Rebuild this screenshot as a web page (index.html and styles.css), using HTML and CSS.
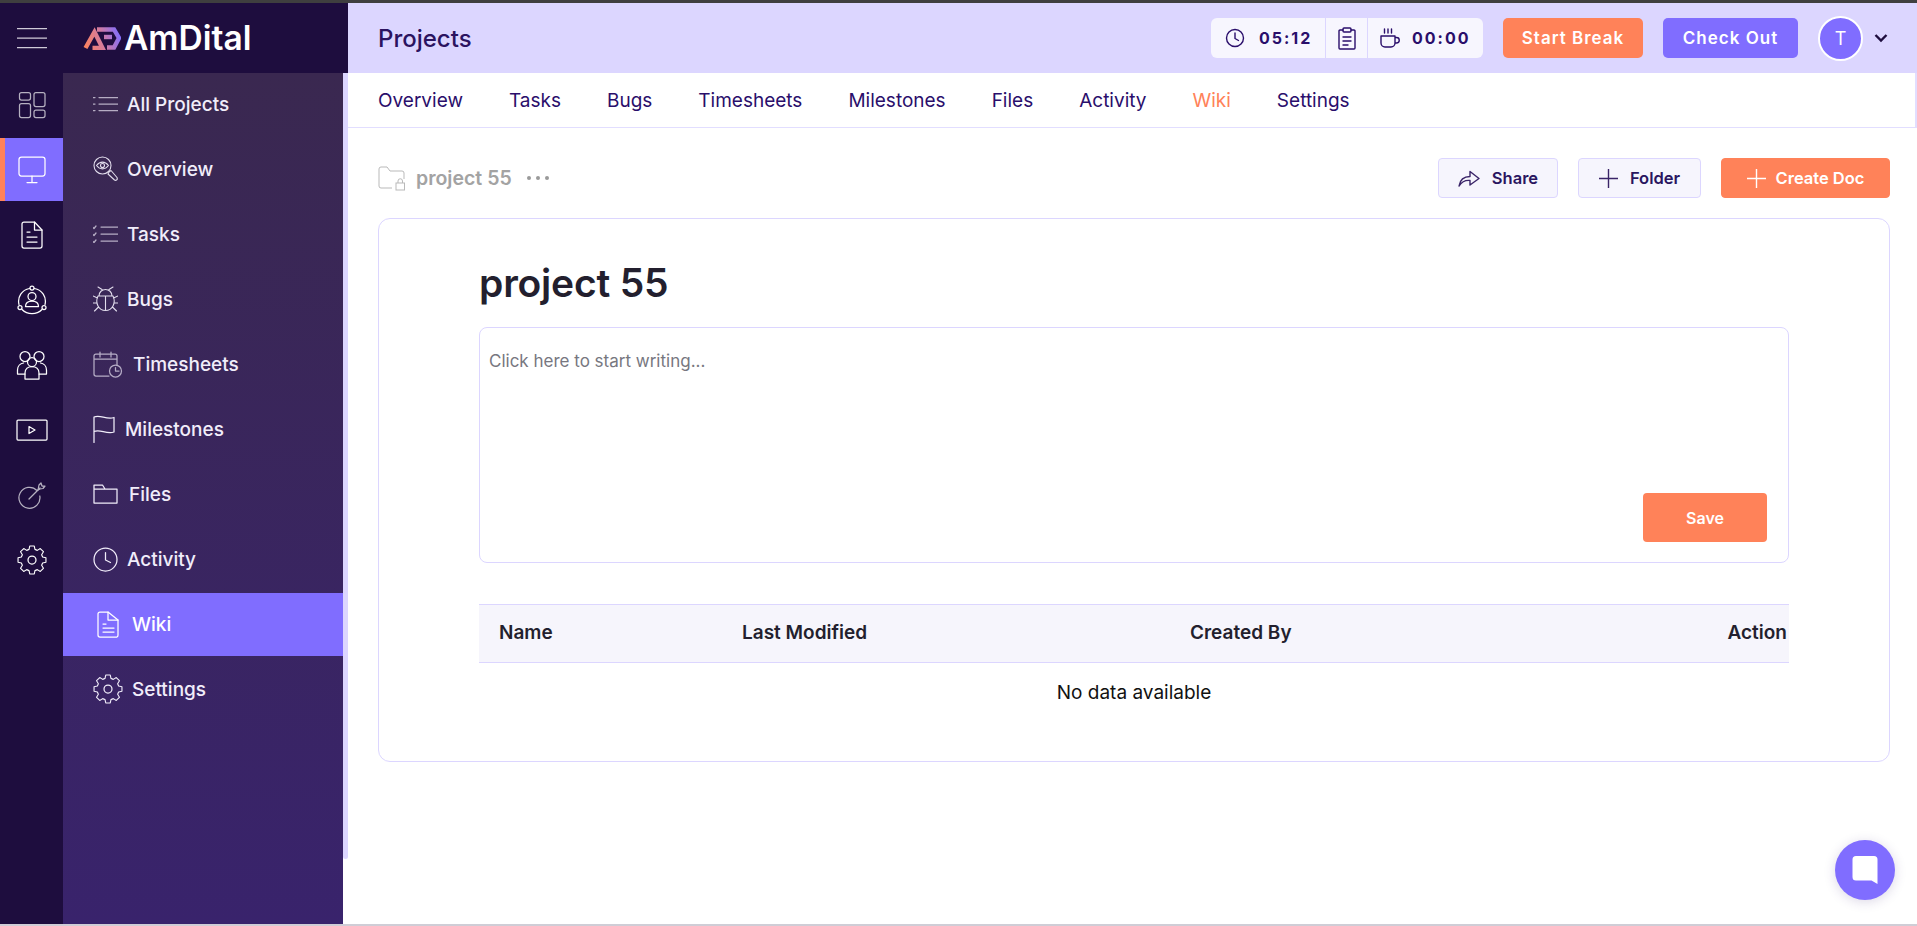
FILE: index.html
```html
<!DOCTYPE html>
<html lang="en">
<head>
<meta charset="utf-8">
<title>AmDital – Projects</title>
<link rel="stylesheet" href="styles.css">
</head>
<body>
<div class="page">
  <div class="topline"></div>
  <div class="app">
    <nav class="rail">
      <div class="rail-top">
        <svg class="ico rail-burger" width="30" height="22" viewBox="0 0 30 22"><path d="M0 1.500h29.500M0 11h29.500M0 20.500h29.500"/></svg>
      </div>
      <div class="rail-list">
        <a class="rail-item"><svg class="ico dim" width="30" height="28" viewBox="0 0 30 28"><rect x="2.500" y="1.500" width="11" height="7.500" rx="2"/><rect x="17" y="1.500" width="11" height="14" rx="2"/><rect x="2.500" y="12.500" width="11" height="14" rx="2"/><rect x="17" y="19" width="11" height="7.500" rx="2"/></svg></a>
        <a class="rail-item active"><svg class="ico" width="30" height="28" viewBox="0 0 30 28"><rect x="2" y="1" width="26" height="19" rx="2.500"/><path d="M15 20v6M10 26.500h10"/></svg></a>
        <a class="rail-item"><svg class="ico" width="24" height="28" viewBox="0 0 24 28"><path d="M14.500 1H4a2 2 0 0 0-2 2v22a2 2 0 0 0 2 2h16a2 2 0 0 0 2-2V9z"/><path d="M14.500 1v8H22M7 11h3M7 16h10M7 21h10"/></svg></a>
        <a class="rail-item"><svg class="ico" width="30" height="30" viewBox="0 0 30 30"><circle cx="15" cy="3" r="2"/><circle cx="3" cy="22.500" r="2"/><circle cx="27" cy="22.500" r="2"/><path d="M12.500 3.500A13 13 0 0 0 2 19.500M17.500 3.500A13 13 0 0 1 28 19.500M5 24.500a14 14 0 0 0 20 0"/><circle cx="15" cy="11.500" r="4"/><path d="M8.500 21.500c0-3.500 2.500-5.500 6.500-5.500s6.500 2 6.500 5.500z"/></svg></a>
        <a class="rail-item"><svg class="ico" width="32" height="30" viewBox="0 0 32 30"><circle cx="9" cy="6.500" r="5"/><circle cx="23" cy="6.500" r="5"/><circle cx="16" cy="12" r="4.500"/><path d="M9 29V23c0-4 3-6.500 7-6.500s7 2.500 7 6.500v6z"/><path d="M9 24H1.500v-4c0-4 3-6.500 6-7M23 24h7.500v-4c0-4-3-6.500-6-7"/></svg></a>
        <a class="rail-item"><svg class="ico" width="32" height="22" viewBox="0 0 32 22"><rect x="1" y="1" width="30" height="20" rx="1"/><path d="M13 7.500l6 3.500-6 3.500z"/></svg></a>
        <a class="rail-item"><svg class="ico dim" width="28" height="28" viewBox="0 0 28 28"><path d="M19 9.500A10.500 10.500 0 1 0 21.800 15M11 18L22 7"/><path d="M20 9l1-5 2-2 1 3h3l-2 2.500-3 .5z"/></svg></a>
        <a class="rail-item"><svg class="ico" width="30" height="30" viewBox="0 0 30 30"><use href="#gear"/></svg></a>
      </div>
    </nav>

    <div class="sidecol">
      <div class="brand">
        <svg class="brand-mark" width="38" height="23" viewBox="0 0 38 23">
          <defs>
            <linearGradient id="lg" gradientUnits="userSpaceOnUse" x1="0" y1="20" x2="38" y2="8"><stop offset="0" stop-color="#ff8259"/><stop offset=".5" stop-color="#d57c9c"/><stop offset="1" stop-color="#806dff"/></linearGradient>
            <g id="gear"><circle cx="15" cy="15" r="4"/><path transform="translate(15 15) scale(.9) translate(-15 -17)" d="M12.500 1.500h5l.8 3.700 2.600 1.100 3.300-2 3.500 3.500-2 3.300 1.100 2.600 3.700.8v5l-3.700.8-1.100 2.600 2 3.300-3.500 3.500-3.300-2-2.600 1.100-.8 3.700h-5l-.8-3.700-2.600-1.100-3.300 2-3.500-3.500 2-3.300-1.100-2.600-3.700-.8v-5l3.700-.8 1.100-2.600-2-3.300 3.500-3.500 3.300 2 2.600-1.100z"/></g>
          </defs>
          <g class="mark-lines">
            <path d="M2.500 21L11.500 5 19.500 21H9.500"/>
            <path d="M14 2.500H31L36 11 31 20.500H24"/>
            <path d="M21 10H29"/>
          </g>
        </svg>
        <span class="brand-name">AmDital</span>
      </div>
      <div class="sub-wrap">
        <ul class="submenu">
          <li class="sub-item"><svg class="ico dim" width="25" height="16" viewBox="0 0 25 16"><path d="M6 1.500h19M6 8h19M6 14.500h19M0 1.500h2M0 8h2M0 14.500h2"/></svg><span>All Projects</span></li>
          <li class="sub-item"><svg class="ico fine" width="25" height="26" viewBox="0 0 25 26"><circle cx="9.500" cy="9.500" r="8.500"/><path d="M3.500 9.500c3.500-4.500 8.500-4.500 12 0-3.500 4.500-8.500 4.500-12 0z"/><circle cx="9.500" cy="9.500" r="2"/><path d="M16 16l2-1.500 6 7c1 2-1 3.500-2.500 2.500L15 18z"/></svg><span>Overview</span></li>
          <li class="sub-item"><svg class="ico dim" width="25" height="18" viewBox="0 0 25 18"><path d="M8 2h17M8 9h17M8 16h17M0 2.500l1 1 2-2.500M0 9.500l1 1 2-2.500M0 16.500l1 1 2-2.500"/></svg><span>Tasks</span></li>
          <li class="sub-item"><svg class="ico fine" width="25" height="26" viewBox="0 0 25 26"><path d="M6 10c0-4 3-6.500 6.500-6.500S19 6 19 10zM5 10h15c1.500 3 1.500 7 0 10-1.500 3-4 4.500-7.500 4.500S6.500 23 5 20c-1.500-3-1.500-7 0-10zM12.500 10v14.500M9 3.500L5 1M16 3.500l4-2.500M4.500 12L0 10M20.500 12l4.500-2M4 17H0M21 17h4M5.500 21L1.500 25M19.500 21l4 4"/></svg><span>Bugs</span></li>
          <li class="sub-item item-wide"><svg class="ico dim" width="30" height="27" viewBox="0 0 30 27"><path d="M16 25H3a2 2 0 0 1-2-2V5a2 2 0 0 1 2-2h19a2 2 0 0 1 2 2v9M1 8h23M7 1v5M18 1v5"/><circle cx="22.500" cy="20" r="6"/><path d="M22.500 16.500V20h3.500"/></svg><span>Timesheets</span></li>
          <li class="sub-item item-wide"><svg class="ico" width="22" height="28" viewBox="0 0 22 28"><path d="M1 27.500V2c6-3 12 3 20 .500V17c-8 2.500-14-3.500-20-.500"/></svg><span>Milestones</span></li>
          <li class="sub-item item-files"><svg class="ico" width="25" height="20" viewBox="0 0 25 20"><path d="M1 19V1h8.500l2.500 4h12v14zM1 5h11"/></svg><span>Files</span></li>
          <li class="sub-item"><svg class="ico" width="25" height="25" viewBox="0 0 25 25"><circle cx="12.500" cy="12.500" r="11.500"/><path d="M12.500 5.500v7.500l5 2.500"/></svg><span>Activity</span></li>
          <li class="sub-item active"><svg class="ico" width="30" height="27" viewBox="0 0 30 27"><path d="M15 1H7a2 2 0 0 0-2 2v21a2 2 0 0 0 2 2h17a2 2 0 0 0 1-2V9z"/><path d="M15 1v8h10M10 13h3M10 17h11M10 21h11"/></svg><span>Wiki</span></li>
          <li class="sub-item"><svg class="ico" width="30" height="30" viewBox="0 0 30 30"><use href="#gear"/></svg><span>Settings</span></li>
        </ul>
        <div class="side-strip"></div>
      </div>
    </div>

    <main class="main">
      <header class="header">
        <h1 class="page-title">Projects</h1>
        <div class="timer">
          <div class="timer-seg seg-time">
            <svg class="ico-t" width="20" height="20" viewBox="0 0 20 20"><circle cx="10" cy="10" r="8.500"/><path d="M10 5v5.500l3.500 2"/></svg>
            <span>05:12</span>
          </div>
          <div class="timer-seg seg-mid">
            <svg class="ico-t" width="18" height="23" viewBox="0 0 18 23"><path d="M5 3H2a1 1 0 0 0-1 1v17a1 1 0 0 0 1 1h14a1 1 0 0 0 1-1V4a1 1 0 0 0-1-1h-3"/><rect x="5" y="1" width="8" height="4" rx="1"/><path d="M5 10h8M5 14h8M5 18h5"/></svg>
          </div>
          <div class="timer-seg seg-time">
            <svg class="ico-t" width="20" height="20" viewBox="0 0 20 20"><path d="M1 8h14v7a4 4 0 0 1-4 4H5a4 4 0 0 1-4-4zM15 9.500h1.500a2.500 2.500 0 0 1 0 5.500H15M4.500 1v4M8 1v4M11.500 1v4"/></svg>
            <span>00:00</span>
          </div>
        </div>
        <button class="hbtn orange">Start Break</button>
        <button class="hbtn purple">Check Out</button>
        <div class="avatar">T</div>
        <svg class="chevron" width="14" height="10" viewBox="0 0 14 10"><path d="M1.500 2L7 7.500 12.500 2"/></svg>
      </header>

      <div class="tabs">
        <a class="tab">Overview</a>
        <a class="tab">Tasks</a>
        <a class="tab">Bugs</a>
        <a class="tab">Timesheets</a>
        <a class="tab">Milestones</a>
        <a class="tab">Files</a>
        <a class="tab">Activity</a>
        <a class="tab current">Wiki</a>
        <a class="tab">Settings</a>
      </div>

      <section class="content">
        <div class="toolbar">
          <div class="crumb">
            <svg class="crumb-ico" width="28" height="25" viewBox="0 0 28 25"><path d="M14 22H3a2 2 0 0 1-2-2V3a2 2 0 0 1 2-2h6l3 4h12a2 2 0 0 1 2 2v6"/><rect x="18" y="17" width="8.500" height="7"/><path d="M20 17v-2a2.200 2.200 0 0 1 4.500 0v2"/></svg>
            <span class="crumb-name">project 55</span>
            <span class="crumb-more"><i></i><i></i><i></i></span>
          </div>
          <div class="actions">
            <button class="abtn btn-share"><svg class="ico-t thin" width="22" height="18" viewBox="0 0 22 18"><path d="M1 17c1-6 5-9.500 11-9.500V2.500l9 7-9 6.500v-4.500c-4.500-.5-8 1-11 5.500z"/></svg>Share</button>
            <button class="abtn btn-folder"><svg class="ico-t thin" width="19" height="19" viewBox="0 0 19 19"><path d="M9.500 0v19M0 9.500h19"/></svg>Folder</button>
            <button class="abtn btn-create"><svg class="ico-w" width="19" height="19" viewBox="0 0 19 19"><path d="M9.500 0v19M0 9.500h19"/></svg>Create Doc</button>
          </div>
        </div>

        <div class="card">
          <h2 class="doc-title">project 55</h2>
          <div class="editor">
            <p class="placeholder">Click here to start writing...</p>
            <button class="save">Save</button>
          </div>
          <div class="table">
            <div class="thead">
              <span class="th th-name">Name</span>
              <span class="th th-mod">Last Modified</span>
              <span class="th th-by">Created By</span>
              <span class="th th-act">Action</span>
            </div>
            <div class="empty">No data available</div>
          </div>
        </div>
      </section>

      <button class="chat" aria-label="Chat">
        <svg width="26" height="30" viewBox="0 0 26 30"><path fill="#fff" d="M4 1h18a3.500 3.500 0 0 1 3.500 3.500V29l-6-3.500H4A3.500 3.500 0 0 1 .5 22V4.500A3.500 3.500 0 0 1 4 1z"/></svg>
      </button>
    </main>
  </div>
  <div class="bottomline"></div>
</div>
</body>
</html>
```

FILE: styles.css
```css
* { box-sizing: border-box; }
html, body { margin: 0; height: 100%; }
body {
  font-family: "Inter", "Liberation Sans", sans-serif;
  background: #fff;
  overflow: hidden;
}
.page { height: 926px; display: flex; flex-direction: column; }
.topline { height: 3px; background: #3f3f3f; flex: none; }
.bottomline { height: 2px; background: #cfcdd6; flex: none; }
.app { flex: 1; display: flex; min-height: 0; }

.ico { fill: none; stroke: currentColor; stroke-width: 1.25; stroke-linecap: round; stroke-linejoin: round; }
.ico.dim { opacity: .68; }
.ico.fine { stroke-width: 1.1; opacity: .92; }

/* rail */
.rail { width: 63px; flex: none; background: #1e0d3e; color: #fff; display: flex; flex-direction: column; }
.rail-top { height: 70px; display: flex; align-items: center; padding-left: 17px; }
.rail-burger { color: #cfcad8; }
.rail-list { display: flex; flex-direction: column; gap: 2px; }
.rail-item { height: 63px; display: flex; align-items: center; justify-content: center; }
.rail-item.active { background: #806dff; border-left: 5px solid #ff8259; padding-right: 5px; }

/* sidebar */
.sidecol { width: 285px; flex: none; display: flex; flex-direction: column; background: #fff; }
.brand { height: 70px; flex: none; background: #1e0d3e; display: flex; align-items: center; padding-left: 20px; gap: 3px; }
.mark-lines { fill: none; stroke: url(#lg); stroke-width: 4.4; stroke-linejoin: miter; }
.brand-name { color: #fff; font-size: 33.500px; font-weight: 600; }
.sub-wrap { flex: 1; display: flex; min-height: 0; }
.submenu {
  width: 280px; margin: 0; padding: 0; list-style: none;
  display: flex; flex-direction: column; gap: 2px;
  background: linear-gradient(180deg, #3a2850 0%, #39236c 100%);
  color: #f1edfa;
}
.side-strip { width: 5px; height: 786px; background: #dcd6ff; border-bottom-right-radius: 3px; border-bottom-left-radius: 3px; }
.sub-item {
  height: 63px; display: flex; align-items: center; gap: 9px; padding: 0 0 1px 30px;
  font-size: 19px; font-weight: 500;
  color: #f1edfa;
}
.item-wide { gap: 10px; }
.item-files { gap: 11px; }
.sub-item.active { background: #806dff; color: #fff; }

/* main */
.main { flex: 1; min-width: 0; display: flex; flex-direction: column; position: relative; }
.header { height: 70px; flex: none; background: #dcd6ff; display: flex; align-items: center; padding-left: 30px; padding-right: 29px; }
.page-title { margin: 0 auto 0 0; font-size: 24px; font-weight: 500; color: #2b1360; }
.timer { display: flex; height: 40px; width: 272px; background: #f7f6fe; border-radius: 6px; margin-right: 20px; }
.timer-seg { display: flex; align-items: center; color: #2a0e6b; font-size: 16px; font-weight: 700; letter-spacing: 2px; }
.seg-time { width: 114px; padding-left: 14px; gap: 14px; }
.seg-mid { width: 43px; justify-content: center; border-left: 1px solid #dcd6ff; border-right: 1px solid #dcd6ff; }
.seg-time:last-child { width: 115px; padding-left: 12px; gap: 12px; }
.ico-t { fill: none; stroke: #2a0e6b; stroke-width: 1.4; stroke-linecap: round; stroke-linejoin: round; flex: none; }
.ico-t.thin { stroke: #3a2468; }
.ico-w { fill: none; stroke: #fff; stroke-width: 1.4; flex: none; }
.hbtn { height: 40px; border: 0; border-radius: 5px; color: #fff; font-family: inherit; font-size: 17px; font-weight: 600; letter-spacing: 1px; padding: 0; }
.hbtn.orange { width: 140px; background: #ff8259; margin-right: 20px; }
.hbtn.purple { width: 135px; background: #806dff; margin-right: 20px; }
.avatar { width: 45px; height: 45px; border-radius: 50%; background: #806dff; border: 2px solid #fff; color: #fff; font-size: 18px; display: flex; align-items: center; justify-content: center; }
.chevron { fill: none; stroke: #1e0d3e; stroke-width: 2.4; margin-left: 11px; }

.tabs { height: 55px; flex: none; display: flex; align-items: center; gap: 46px; padding-left: 30px; border-bottom: 1px solid #e2deff; border-right: 2px solid #e2deff; }
.tab { font-size: 19px; font-weight: 400; color: #2a0e6b; }
.tab.current { color: #ff8259; }

.content { flex: 1; padding: 30px 27px 0 30px; display: flex; flex-direction: column; gap: 20px; }
.toolbar { height: 40px; display: flex; align-items: center; justify-content: space-between; }
.crumb { display: flex; align-items: center; color: #a3a3a3; }
.crumb-ico { fill: none; stroke: #b9b9b9; stroke-width: 1; }
.crumb-name { font-size: 19.500px; font-weight: 600; margin-left: 10px; }
.crumb-more { display: flex; gap: 5px; margin-left: 15px; }
.crumb-more i { width: 4px; height: 4px; border-radius: 50%; background: #9a9a9a; }
.actions { display: flex; gap: 20px; }
.abtn { height: 40px; display: flex; align-items: center; justify-content: center; gap: 12px; border-radius: 4px; border: 1px solid #dcd6ff; background: #f6f5fd; color: #2a1560; font-family: inherit; font-size: 16.500px; font-weight: 600; padding: 0; }
.btn-share { width: 120px; }
.btn-folder { width: 123px; }
.btn-create { width: 169px; background: #ff8259; border-color: #ff8259; color: #fff; gap: 10px; }

.card { height: 544px; border: 1px solid #dcd6ff; border-radius: 12px; padding: 0 100px; display: flex; flex-direction: column; }
.doc-title { margin: 40px 0 0; height: 68px; font-size: 39px; line-height: 48px; font-weight: 600; color: #231f2e; letter-spacing: -.2px; }
.editor { height: 236px; border: 1px solid #dcd6ff; border-radius: 8px; display: flex; flex-direction: column; padding: 23px 21px 20px 9px; }
.placeholder { margin: 0; font-size: 17px; line-height: 20px; color: #777780; flex: 1; }
.save { align-self: flex-end; width: 124px; height: 49px; border: 0; border-radius: 4px; background: #ff8259; color: #fff; font-family: inherit; font-size: 16px; font-weight: 600; }
.table { margin-top: 41px; }
.thead { height: 59px; background: #f6f5fc; border-top: 1px solid #dcd6ff; border-bottom: 1px solid #dcd6ff; display: grid; grid-template-columns: 243px 448px 1fr auto; align-items: center; padding: 0 2px 2px 20px; }
.th { font-size: 19px; font-weight: 600; color: #231f2e; }
.empty { text-align: center; font-size: 19px; color: #111; padding-top: 18px; line-height: 24px; }

.chat { position: absolute; right: 22px; bottom: 24px; width: 60px; height: 60px; border-radius: 50%; border: 0; padding: 0; background: #806dff; box-shadow: 0 2px 12px rgba(60,40,120,.18); display: flex; align-items: center; justify-content: center; }
```
